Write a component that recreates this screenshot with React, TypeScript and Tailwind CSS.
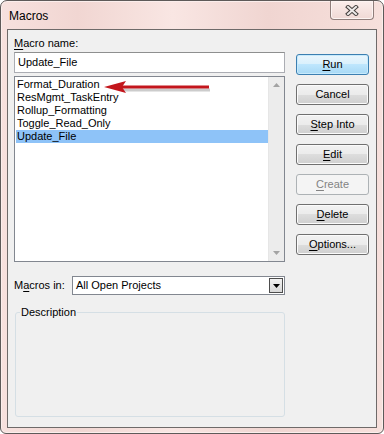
import React from 'react';

const macros = ['Format_Duration', 'ResMgmt_TaskEntry', 'Rollup_Formatting', 'Toggle_Read_Only', 'Update_File'];

type BtnProps = { children: React.ReactNode; kind?: 'default' | 'normal' | 'disabled' };

const Btn: React.FC<BtnProps> = ({ children, kind = 'normal' }) => {
  const look =
    kind === 'default'
      ? 'border-[#3c7fb1] bg-[linear-gradient(#eaf6fd_0%,#d9f0fc_50%,#bee6fd_50%,#a7d9f5_100%)] shadow-[inset_0_0_0_1px_#c7eafc] text-black'
      : kind === 'disabled'
        ? 'border-[#adb2b5] bg-[#f4f4f4] text-[#838383]'
        : 'border-[#707070] bg-[linear-gradient(#f2f2f2_0%,#ebebeb_50%,#dddddd_50%,#cfcfcf_100%)] shadow-[inset_0_0_0_1px_#fbfbfb] text-black';
  return (
    <div className={`w-[73px] h-[21px] rounded-[3px] border flex items-center justify-center text-[11px] leading-none ${look}`}>
      {children}
    </div>
  );
};

const U: React.FC<{ children: React.ReactNode }> = ({ children }) => <span className="underline underline-offset-[2px]">{children}</span>;

export default function App() {
  return (
    <div className="w-[384px] h-[434px] bg-white font-['Liberation_Sans',Arial,sans-serif]">
      {/* window frame */}
      <div className="w-[384px] h-[434px] rounded-t-[7px] rounded-b-[6px] border border-[#5e5a59] bg-[linear-gradient(90deg,#f7e1de_0%,#f1d6d2_20%,#f9e6e3_45%,#f0d5d1_70%,#f7e0dc_100%)] shadow-[inset_0_0_0_1px_#fbeeec] flex flex-col">
        {/* title bar */}
        <div className="h-[28px] flex items-start justify-between">
          <div className="pl-[8px] pt-[8px] text-[12px] leading-[14px] text-black">Macros</div>
          <div className="mr-[9px] w-[44px] h-[19px] rounded-b-[4px] border border-t-0 border-[#8f7e7b] bg-[linear-gradient(#fbeeec,#f0d9d5)] shadow-[inset_0_0_0_1px_#fdf4f2] flex items-center justify-center">
            <svg width="14" height="11" viewBox="0 0 14 11">
              <path d="M3 2 L11 9 M11 2 L3 9" stroke="#45413f" strokeWidth="4" strokeLinecap="square" />
              <path d="M3 2 L11 9 M11 2 L3 9" stroke="#eeeae9" strokeWidth="2" strokeLinecap="square" />
            </svg>
          </div>
        </div>

        {/* client area */}
        <div className="ml-[6px] w-[370px] h-[399px] border border-[#6e6a69] bg-[#f0f0f0] flex gap-[11px] pl-[6px] pt-[7px] text-[11px] text-black">
          {/* left column */}
          <div className="w-[271px] flex flex-col">
            <div className="h-[13px] leading-[13px] mb-[2px]">
              <U>M</U>acro name:
            </div>
            <div className="h-[21px] border border-[#abadb3] border-t-[#8e8f8f] bg-white flex items-center pl-[3px] leading-none">
              Update_File
            </div>

            {/* macro list */}
            <div className="relative mt-[3px] h-[186px] border border-[#828790] bg-white flex">
              <div className="flex-1 pt-[1px] pl-[1px]">
                {macros.map((m) => (
                  <div
                    key={m}
                    className={`h-[13px] leading-[13px] pl-[1px] ${m === 'Update_File' ? 'bg-[#8ec3f8]' : ''}`}
                  >
                    {m}
                  </div>
                ))}
              </div>
              <div className="w-[16px] bg-[#ececec] border-l border-[#e6e6e6] flex flex-col items-center justify-between py-[6px]">
                <svg width="7" height="4" viewBox="0 0 7 4">
                  <path d="M0 4 L3.5 0 L7 4 Z" fill="#a3a3a3" />
                </svg>
                <svg width="7" height="4" viewBox="0 0 7 4">
                  <path d="M0 0 L3.5 4 L7 0 Z" fill="#a3a3a3" />
                </svg>
              </div>
              {/* red annotation arrow */}
              <svg className="absolute left-[87px] top-[2px]" width="112" height="20" viewBox="0 0 112 20">
                <path d="M20 11 L108 11" stroke="#9a9a9a" strokeWidth="3" opacity="0.5" />
                <path d="M20 8 L107 8" stroke="#c3161c" strokeWidth="3" />
                <path d="M2 8 L24 2 L20 8 L24 14 Z" fill="#c3161c" />
              </svg>
            </div>

            {/* macros in */}
            <div className="mt-[14px] h-[19px] flex items-center">
              <div className="w-[58px]">
                M<U>a</U>cros in:
              </div>
              <div className="flex-1 h-[19px] border border-[#828790] bg-white flex items-center pl-[3px] pr-[1px]">
                <span className="flex-1 leading-none">All Open Projects</span>
                <div className="w-[14px] h-[15px] border border-[#4d4d4d] bg-[linear-gradient(#f2f2f2,#d8d8d8)] flex items-center justify-center">
                  <svg width="7" height="4" viewBox="0 0 7 4">
                    <path d="M0 0 L3.5 4 L7 0 Z" fill="#000" />
                  </svg>
                </div>
              </div>
            </div>

            {/* description group */}
            <fieldset className="mt-[11px] ml-[1px] w-[270px] h-[111px] border border-[#d5dfe5] rounded-[3px] px-[4px]">
              <legend className="px-[1px] ml-[0px] leading-[13px]">Description</legend>
            </fieldset>
          </div>

          {/* right column buttons */}
          <div className="flex flex-col gap-[9px] pt-[17px]">
            <Btn kind="default">
              <span><U>R</U>un</span>
            </Btn>
            <Btn>Cancel</Btn>
            <Btn>
              <span><U>S</U>tep Into</span>
            </Btn>
            <Btn>
              <span><U>E</U>dit</span>
            </Btn>
            <Btn kind="disabled">
              <span><U>C</U>reate</span>
            </Btn>
            <Btn>
              <span><U>D</U>elete</span>
            </Btn>
            <Btn>
              <span><U>O</U>ptions...</span>
            </Btn>
          </div>
        </div>
      </div>
    </div>
  );
}
